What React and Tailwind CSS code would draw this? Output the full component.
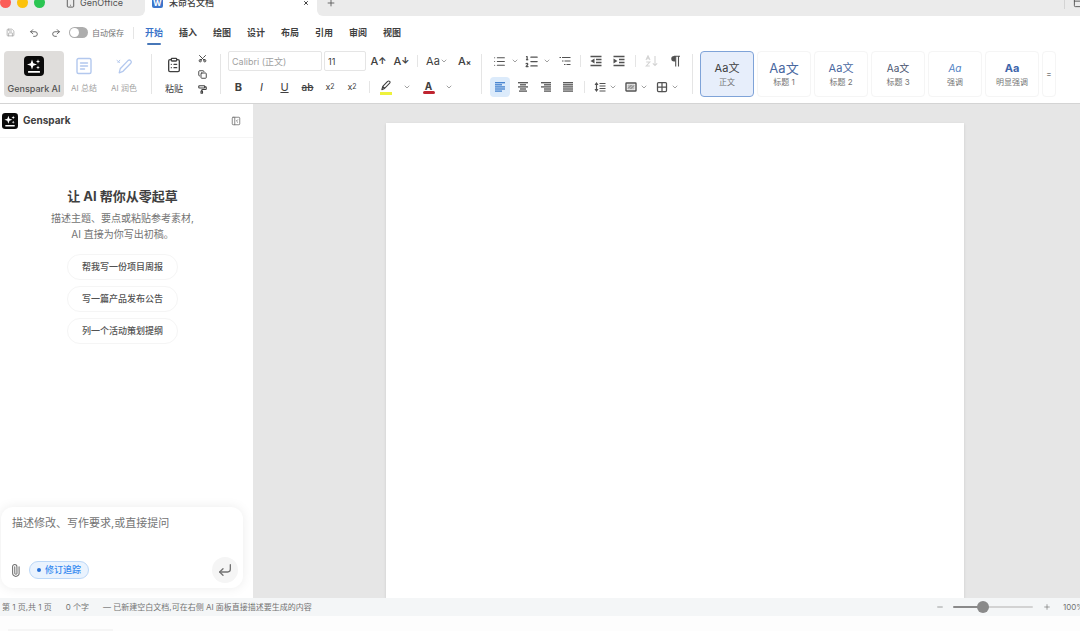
import React, { useState } from 'react';
import {
  Save, Undo2, Redo2, ClipboardList, Scissors, Copy, PaintRoller, ChevronDown, List, ListOrdered,
  Paperclip, CornerDownLeft, Minus, Plus, X, Grid2x2, PanelLeftClose, Smartphone, PanelTop,
} from 'lucide-react';

const menus = ['开始', '插入', '绘图', '设计', '布局', '引用', '审阅', '视图'];

const styleCards = [
  { sample: 'Aa文', label: '正文', look: 'text-[11px] text-neutral-700' },
  { sample: 'Aa文', label: '标题 1', look: 'text-[13px] text-[#4a689f]' },
  { sample: 'Aa文', label: '标题 2', look: 'text-[11px] text-[#4a689f]' },
  { sample: 'Aa文', label: '标题 3', look: 'text-[10px] text-[#4a5570]' },
  { sample: 'Aa', label: '强调', look: 'text-[10px] italic text-[#4f7fc4]' },
  { sample: 'Aa', label: '明显强调', look: 'text-[11px] font-bold text-[#3f66ab]' },
];

const prompts = ['帮我写一份项目周报', '写一篇产品发布公告', '列一个活动策划提纲'];

function GensparkLogo({ className }) {
  return (
    <svg viewBox="0 0 20 20" className={className}>
      <rect width="20" height="20" rx="4" fill="#0b0b0b" />
      <path d="M8 3.5 9.3 7.2 13 8.5 9.3 9.8 8 13.5 6.7 9.8 3 8.5 6.7 7.2Z" fill="#fff" />
      <path d="M14 3.3 14.6 4.9 16.2 5.5 14.6 6.1 14 7.7 13.4 6.1 11.8 5.5 13.4 4.9Z" fill="#fff" />
      <path d="M14 9.6 14.5 11 15.9 11.5 14.5 12 14 13.4 13.5 12 12.1 11.5 13.5 11Z" fill="#fff" />
      <rect x="4" y="15" width="12" height="1.8" rx=".5" fill="#fff" />
    </svg>
  );
}

function Lines({ rows, className }) {
  return (
    <svg viewBox="0 0 12 12" className={className} stroke="currentColor" strokeWidth="1.3">
      {rows.map(([x1, x2], i) => (
        <path key={i} d={`M${x1} ${1.7 + i * 2.1}H${x2}`} />
      ))}
    </svg>
  );
}

function IndentIcon({ arrow }) {
  return (
    <svg viewBox="0 0 12 12" className="size-3" stroke="currentColor" strokeWidth="1.3">
      <path d="M.5 1.500h11M6 4.500h5.500M6 7.500h5.500M.5 10.500h11" />
      <path d={arrow} fill="currentColor" stroke="none" />
    </svg>
  );
}

function Tool({ label, active, className = 'w-[23px]', children }) {
  return (
    <button
      aria-label={label}
      className={`flex h-5 shrink-0 items-center justify-center ${className} ${active ? 'rounded-sm bg-[#dcebfb] text-[#3f7fce]' : ''}`}
    >
      {children}
    </button>
  );
}

function Chevron() {
  return <ChevronDown className="size-2 shrink-0 text-neutral-500" />;
}

function Divider({ className }) {
  return <span className={`w-px shrink-0 bg-neutral-200 ${className}`} />;
}

function TitleBar() {
  return (
    <header className="flex h-4 shrink-0 items-end overflow-hidden text-[9px]">
      <div className="flex h-[27px] w-[145px] shrink-0 items-center rounded-br-md bg-[#ebebeb] text-neutral-600">
        <span className="size-[11px] rounded-full bg-[#fb5c57]" />
        <span className="ml-[6px] size-[11px] rounded-full bg-[#fcc20c]" />
        <span className="ml-[6px] size-[11px] rounded-full bg-[#2bc552]" />
        <Smartphone className="ml-5 size-[11px]" />
        <span className="ml-1">GenOffice</span>
      </div>
      <div className="flex h-[27px] w-[172px] shrink-0 items-center pl-[7px] pr-2 text-neutral-700">
        <span className="flex size-[11px] items-center justify-center rounded-xs bg-[#3c76cb] text-[8px] font-bold text-white">W</span>
        <span className="ml-[6px] font-medium">未命名文档</span>
        <button aria-label="关闭标签" className="ml-auto"><X className="size-[6px]" strokeWidth={4} /></button>
      </div>
      <div className="flex h-[27px] flex-1 items-center rounded-bl-md bg-[#ebebeb] pl-[9px] text-neutral-600">
        <button aria-label="新建标签"><Plus className="size-[10px]" /></button>
        <Divider className="ml-auto h-3 bg-neutral-300" />
        <PanelTop className="-mr-1 ml-2 size-[11px]" />
      </div>
    </header>
  );
}

function MenuBar() {
  const [current, setCurrent] = useState('开始');
  return (
    <nav className="flex h-[33px] shrink-0 items-center pl-[6px] text-[9px] text-neutral-700">
      <button aria-label="保存" className="text-neutral-400"><Save className="size-[9px]" /></button>
      <button aria-label="撤销" className="ml-[14px] text-neutral-600"><Undo2 className="size-[10px]" /></button>
      <button aria-label="重做" className="ml-3 text-neutral-600"><Redo2 className="size-[10px]" /></button>
      <label className="ml-2 flex items-center text-[8px] text-neutral-500">
        <input type="checkbox" role="switch" className="peer sr-only" />
        <span className="mr-1 flex h-[11px] w-[19px] rounded-full bg-[#adadad] p-px peer-checked:justify-end">
          <span className="size-[9px] rounded-full bg-white" />
        </span>
        自动保存
      </label>
      <Divider className="ml-[9px] h-3" />
      <div className="ml-[11px] flex gap-4">
        {menus.map((menu) => (
          <button
            key={menu}
            onClick={() => setCurrent(menu)}
            className={`relative flex h-6 items-center font-bold ${menu === current ? 'text-[#3a73c9]' : ''}`}
          >
            {menu}
            {menu === current && <span className="absolute inset-x-[2px] bottom-0 h-[2px] rounded-full bg-[#4777b8]" />}
          </button>
        ))}
      </div>
    </nav>
  );
}

function AiGroup() {
  return (
    <div className="flex shrink-0 text-[8px]">
      <button className="flex h-[46px] w-[60px] flex-col items-center justify-between rounded-sm bg-[#dfdddb] pb-[2px] pt-[5px] text-[9px] font-medium text-neutral-600">
        <GensparkLogo className="size-5" />
        <span>Genspark AI</span>
      </button>
      <button className="flex h-[46px] w-10 flex-col items-center justify-between pb-[3px] pt-[6px] text-neutral-400">
        <svg viewBox="0 0 18 18" className="size-[18px] text-[#b3c8ee]" fill="none" stroke="currentColor" strokeWidth="1.4" strokeLinecap="round">
          <rect x="2" y="1.5" width="14" height="15" rx="1.5" />
          <path d="M5.500 6h7M5.500 9h7M5.500 12h4" />
        </svg>
        <span>AI 总结</span>
      </button>
      <button className="flex h-[46px] w-10 flex-col items-center justify-between pb-[3px] pt-[6px] text-neutral-400">
        <svg viewBox="0 0 18 18" className="size-[18px] text-[#b3c8ee]" fill="none" stroke="currentColor" strokeWidth="1.3" strokeLinejoin="round" strokeLinecap="round">
          <path d="M5.200 11.800 13 3.600Q14.400 2.300 15.700 3.600T15.800 6.300L8 14.300 4.200 15.800Z" />
          <path d="M2 3.500 4.500 5.500M4.800 3.200 3 5.500" strokeWidth="1" />
        </svg>
        <span>AI 润色</span>
      </button>
    </div>
  );
}

function ClipboardGroup() {
  return (
    <div className="flex shrink-0">
      <button className="flex h-[46px] w-10 flex-col items-center justify-between pb-[2px] pt-[6px] text-[9px] text-neutral-700">
        <ClipboardList className="size-4" />
        <span>粘贴</span>
      </button>
      <div className="flex w-4 flex-col items-center justify-between py-[3px] text-neutral-700">
        <button aria-label="剪切"><Scissors className="size-[9px] -rotate-90" strokeWidth={2.5} /></button>
        <button aria-label="复制"><Copy className="size-[9px]" strokeWidth={2.5} /></button>
        <button aria-label="格式刷"><PaintRoller className="size-[9px]" strokeWidth={3} /></button>
      </div>
    </div>
  );
}

function FontGroup() {
  return (
    <div className="flex shrink-0 flex-col justify-between text-neutral-700">
      <div className="flex items-center">
        <input aria-label="字体" defaultValue="Calibri (正文)" className="h-5 w-[94px] rounded-xs border border-neutral-200 px-[3px] text-[9px] text-neutral-400" />
        <input aria-label="字号" defaultValue="11" className="ml-[2px] h-5 w-[42px] rounded-xs border border-neutral-200 px-[3px] text-[9px]" />
        <Tool label="增大字号" className="ml-px w-[23px]"><span className="text-[11px] font-medium">A</span><span className="text-[9px] font-bold">↑</span></Tool>
        <Tool label="减小字号"><span className="text-[11px] font-medium">A</span><span className="text-[9px] font-bold">↓</span></Tool>
        <Divider className="ml-1 h-3" />
        <Tool label="更改大小写" className="ml-[7px] w-6"><span className="text-[11px]">Aa</span><Chevron /></Tool>
        <Tool label="清除格式" className="ml-1 w-[23px]"><span className="text-[11px] font-medium">A</span><span className="mt-1 text-[8px] font-bold">×</span></Tool>
      </div>
      <div className="-ml-px flex items-center text-[10px]">
        <Tool label="加粗"><b className="text-[11px]">B</b></Tool>
        <Tool label="斜体"><i className="text-[11px]">I</i></Tool>
        <Tool label="下划线"><u className="text-[11px]">U</u></Tool>
        <Tool label="删除线"><s className="font-medium">ab</s></Tool>
        <Tool label="下标" className="w-[22px]"><span className="text-[9px]">x</span><span className="text-[7px]">2</span></Tool>
        <Tool label="上标" className="w-[22px]"><span className="text-[9px]">x</span><span className="text-[7px]">2</span></Tool>
        <Divider className="ml-[6px] h-3" />
        <Tool label="突出显示" className="ml-1 w-[23px] flex-col">
          <svg viewBox="0 0 12 12" className="size-[11px]" fill="none" stroke="currentColor" strokeWidth="1.2" strokeLinejoin="round">
            <path d="M3 7 8.300 1.500Q9.500.600 10.500 1.600T10.300 3.800L5 9.200 2 10.500ZM3 7 5 9.200" />
          </svg>
          <span className="mt-px h-[3px] w-3 bg-[#eef23c]" />
        </Tool>
        <Tool label="突出显示颜色" className="w-[19px]"><Chevron /></Tool>
        <Tool label="字体颜色" className="w-[25px] flex-col">
          <span className="text-[10px] font-bold leading-[10px]">A</span>
          <span className="h-[3px] w-3 rounded-xs bg-[#bf2430]" />
        </Tool>
        <Tool label="更多字体颜色" className="w-4"><Chevron /></Tool>
      </div>
    </div>
  );
}

function ParagraphGroup() {
  return (
    <div className="flex shrink-0 flex-col justify-between text-neutral-600">
      <div className="flex items-center">
        <Tool label="项目符号" className="w-8 gap-[5px]"><List className="size-[13px] shrink-0" /><Chevron /></Tool>
        <Tool label="编号" className="w-[31px] gap-1"><ListOrdered className="size-[15px] shrink-0" /><Chevron /></Tool>
        <Tool label="多级列表">
          <svg viewBox="0 0 12 12" className="size-3" stroke="currentColor" strokeWidth="1.2">
            <path d="M.500 2.500H2M3 2.500h8.500M3 6h1.500M5.500 6h6M5 9.500h1.500M7.500 9.500h4" />
          </svg>
        </Tool>
        <Divider className="ml-1 h-3" />
        <Tool label="减少缩进" className="ml-[3px] w-[23px]"><IndentIcon arrow="M4.500 3.500v5L.500 6Z" /></Tool>
        <Tool label="增加缩进"><IndentIcon arrow="M.500 3.500v5l4-2.500Z" /></Tool>
        <Divider className="ml-[5px] h-3" />
        <Tool label="排序" className="ml-1 w-[23px]">
          <svg viewBox="0 0 14 12" className="h-3 w-[14px] text-neutral-300" fill="none" stroke="currentColor" strokeWidth="1.1">
            <path d="M1 5 3 .800 5 5M1.700 3.700h2.600M1.200 7h3.600L1.200 11h3.600M10 1v9.500M7.800 8.300 10 10.500l2.200-2.200" />
          </svg>
        </Tool>
        <Tool label="段落标记">
          <svg viewBox="0 0 12 12" className="size-3" fill="none" stroke="currentColor" strokeWidth="1.1">
            <path d="M11 1.200H5M6.700 1.200V11.500M9.500 1.200V11.500" />
            <path d="M6.500 1H5a2.700 2.700 0 0 0 0 5.500h1.500Z" fill="currentColor" stroke="none" />
          </svg>
        </Tool>
      </div>
      <div className="flex items-center">
        <Tool label="左对齐" active className="w-5"><Lines className="size-3" rows={[[1, 11], [1, 8], [1, 11], [1, 11], [1, 8]]} /></Tool>
        <Tool label="居中" className="ml-px w-[23px]"><Lines className="size-3" rows={[[1, 11], [3, 9], [1, 11], [3, 9], [2, 10]]} /></Tool>
        <Tool label="右对齐"><Lines className="size-3" rows={[[1, 11], [4, 11], [1, 11], [4, 11], [4, 11]]} /></Tool>
        <Tool label="两端对齐" className="w-[22px]"><Lines className="size-3" rows={[[1, 11], [1, 11], [1, 11], [1, 11], [1, 11]]} /></Tool>
        <Divider className="ml-[5px] h-3" />
        <Tool label="行距" className="ml-[9px] w-[23px] gap-[3px]">
          <svg viewBox="0 0 12 12" className="size-3 shrink-0" stroke="currentColor" strokeWidth="1.2">
            <path d="M2.500 2v8M5.500 2.500h6M5.500 5h6M5.500 7.500h6M5.500 10h6" />
            <path d="M.500 4 2.500 1 4.500 4ZM.500 8l2 3 2-3Z" fill="currentColor" stroke="none" />
          </svg>
          <Chevron />
        </Tool>
        <Tool label="底纹" className="ml-2 w-[23px] gap-[3px]">
          <svg viewBox="0 0 12 12" className="size-3 shrink-0" fill="none" stroke="currentColor">
            <rect x="1" y="2" width="10" height="8" rx=".5" strokeWidth="1.4" />
            <rect x="2.5" y="3.500" width="7" height="5" fill="#bdbdbd" stroke="none" />
            <path d="M3 7.500 6.500 4M5.500 8 9 4.500" strokeWidth=".6" />
          </svg>
          <Chevron />
        </Tool>
        <Tool label="边框" className="ml-2 w-[23px] gap-[3px]"><Grid2x2 className="size-3 shrink-0" strokeWidth={2.5} /><Chevron /></Tool>
      </div>
    </div>
  );
}

function StyleGallery() {
  const [selected, setSelected] = useState(0);
  return (
    <div className="flex shrink-0 gap-[3px]">
      {styleCards.map((card, index) => (
        <button
          key={card.label}
          onClick={() => setSelected(index)}
          className={`flex h-[46px] w-[54px] flex-col items-center justify-center rounded-sm border ${index === selected ? 'border-[#7fa3d8] bg-[#e7eefb]' : 'border-neutral-100 bg-white'}`}
        >
          <span className={`leading-4 ${card.look}`}>{card.sample}</span>
          <span className="text-[8px] leading-3 text-neutral-500">{card.label}</span>
        </button>
      ))}
      <button aria-label="更多样式" className="flex w-[14px] items-center justify-center rounded-sm border border-neutral-100 text-[8px] text-neutral-500">=</button>
    </div>
  );
}

function Ribbon() {
  return (
    <div className="flex shrink-0 border-b border-neutral-300 pb-[6px] pl-1 pt-[2px]">
      <AiGroup />
      <Divider className="ml-[7px] h-10 self-center" />
      <div className="ml-[2px]"><ClipboardGroup /></div>
      <Divider className="ml-[10px] h-10 self-center" />
      <div className="ml-[7px] flex"><FontGroup /></div>
      <Divider className="ml-[5px] h-10 self-center" />
      <div className="ml-2 flex"><ParagraphGroup /></div>
      <Divider className="ml-[6px] h-10 self-center" />
      <div className="ml-[7px]"><StyleGallery /></div>
    </div>
  );
}

function Sidebar() {
  return (
    <aside className="flex w-[253px] shrink-0 flex-col bg-white">
      <div className="flex h-[34px] items-center border-b border-neutral-100 pl-[2px] pr-3">
        <GensparkLogo className="size-4" />
        <h2 className="ml-[5px] text-[10px] font-bold text-neutral-700">Genspark</h2>
        <button aria-label="收起面板" className="ml-auto text-neutral-500"><PanelLeftClose className="size-[10px]" /></button>
      </div>
      <div className="flex flex-1 flex-col items-center pr-2 pt-12 text-center">
        <h1 className="text-[13px] font-bold leading-5 text-neutral-700">让 AI 帮你从零起草</h1>
        <p className="mt-1 text-[10px] leading-4 text-neutral-500">
          描述主题、要点或粘贴参考素材,<br />AI 直接为你写出初稿。
        </p>
        <div className="mt-3 flex flex-col gap-[6px]">
          {prompts.map((prompt) => (
            <button key={prompt} className="h-[26px] rounded-full border border-neutral-100 px-[14px] text-[9px] font-medium text-neutral-600">
              {prompt}
            </button>
          ))}
        </div>
      </div>
      <div className="mb-[10px] ml-px mr-[10px] flex flex-col rounded-xl bg-white pb-[5px] pl-[7px] pr-[5px] pt-2 shadow-[0_0_12px_rgba(0,0,0,0.08)]">
        <textarea
          aria-label="描述"
          rows={2}
          placeholder="描述修改、写作要求,或直接提问"
          className="block h-[42px] resize-none px-1 text-[11px] leading-4 outline-none placeholder:text-neutral-500"
        />
        <div className="flex items-center">
          <button aria-label="添加附件" className="ml-px text-neutral-500"><Paperclip className="size-[13px] -rotate-45" /></button>
          <button className="ml-[7px] flex h-[18px] items-center gap-1 rounded-full border border-[#bcd8f8] bg-[#eaf3fe] px-[7px] text-[9px] font-medium text-[#3388f0]">
            <span className="size-1 rounded-full bg-[#2570d8]" />
            修订追踪
          </button>
          <button aria-label="发送" className="ml-auto flex size-[26px] items-center justify-center rounded-full bg-neutral-100 text-neutral-500">
            <CornerDownLeft className="size-4" />
          </button>
        </div>
      </div>
    </aside>
  );
}

function StatusBar() {
  return (
    <footer className="flex h-[18px] shrink-0 items-center whitespace-nowrap bg-[#f4f6f7] pl-[2px] text-[8px] text-neutral-500">
      <span>第 1 页,共 1 页</span>
      <span className="ml-[14px]">0 个字</span>
      <span className="ml-[14px]">— 已新建空白文档,可在右侧 AI 面板直接描述要生成的内容</span>
      <button aria-label="缩小" className="ml-auto"><Minus className="size-2" /></button>
      <input
        type="range"
        aria-label="缩放"
        min="0"
        max="100"
        defaultValue="35"
        className="ml-[9px] h-3 w-20 appearance-none bg-transparent [&::-webkit-slider-runnable-track]:h-[2px] [&::-webkit-slider-runnable-track]:rounded-full [&::-webkit-slider-runnable-track]:bg-[linear-gradient(to_right,#8a8a8a_36%,#d3d3d3_36%)] [&::-webkit-slider-thumb]:-mt-[5px] [&::-webkit-slider-thumb]:size-3 [&::-webkit-slider-thumb]:appearance-none [&::-webkit-slider-thumb]:rounded-full [&::-webkit-slider-thumb]:bg-[#8a8a8a]"
      />
      <button aria-label="放大" className="ml-[10px]"><Plus className="size-2" /></button>
      <span className="ml-3 w-[17px]">100%</span>
    </footer>
  );
}

function App() {
  return (
    <div className="flex h-screen flex-col overflow-hidden bg-white font-[Inter,'Noto_Sans_CJK_SC',sans-serif]">
      <TitleBar />
      <MenuBar />
      <Ribbon />
      <div className="flex min-h-0 flex-1">
        <Sidebar />
        <main className="flex flex-1 justify-center bg-[#e6e6e6] pl-4 pt-[19px]">
          <div className="w-full max-w-[578px] bg-white shadow-sm" />
        </main>
      </div>
      <StatusBar />
      <div className="flex h-[15px] shrink-0 items-end bg-[#fdfdfd]">
        <span className="ml-2 h-[2px] w-[105px] bg-neutral-100" />
      </div>
    </div>
  );
}

export default App;
